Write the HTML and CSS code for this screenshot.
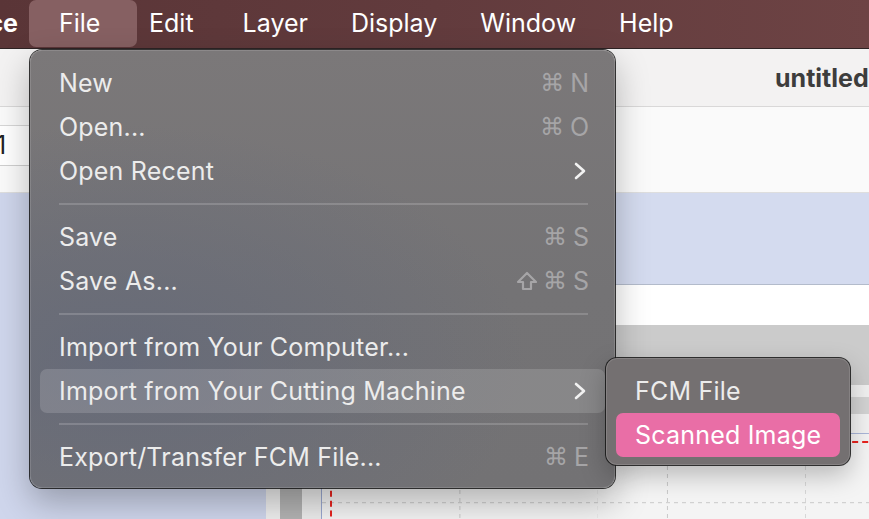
FILE: index.html
```html
<!DOCTYPE html>
<html>
<head>
<meta charset="utf-8">
<link rel="stylesheet" href="styles.css">
</head>
<body>
<div class="screen">
  <header class="menubar">
    <span class="mb-app"><span>Canvas Workspace</span></span>
    <span class="mb-active">File</span>
    <span class="mb-item mb-edit">Edit</span>
    <span class="mb-item mb-layer">Layer</span>
    <span class="mb-item">Display</span>
    <span class="mb-item">Window</span>
    <span class="mb-item">Help</span>
  </header>

  <div class="window">
    <div class="titlebar"><span class="title">untitled</span></div>
    <div class="toolbar"><div class="field"><span class="field-val">1</span></div></div>
    <div class="content">
      <aside class="sidebar"></aside>
      <main class="main">
        <div class="band"></div>
        <div class="strip"></div>
        <div class="workspace">
          <div class="frame">
            <div class="ruler-top"></div>
            <div class="frame-body">
              <div class="ruler-left"></div>
              <div class="canvas">
                <div class="red-rect"></div>
              </div>
            </div>
          </div>
        </div>
      </main>
    </div>
  </div>

  <div class="menu">
    <div class="row"><span class="label">New</span><span class="key"><span class="sym">⌘</span>N</span></div>
    <div class="row"><span class="label">Open...</span><span class="key"><span class="sym">⌘</span>O</span></div>
    <div class="row"><span class="label">Open Recent</span><svg class="chev" width="14" height="18" viewBox="0 0 14 18"><polyline points="3,2 11,9 3,16" fill="none" stroke="#f2f2f2" stroke-width="2.6" stroke-linecap="round" stroke-linejoin="round"/></svg></div>
    <div class="sep"></div>
    <div class="row"><span class="label">Save</span><span class="key"><span class="sym">⌘</span>S</span></div>
    <div class="row"><span class="label">Save As...</span><span class="key"><svg class="shift" width="22" height="20" viewBox="0 0 22 20"><polygon points="11,2 20,11 15,11 15,18 7,18 7,11 2,11" fill="none" stroke="#a6a5a7" stroke-width="2.2" stroke-linejoin="round"/></svg><span class="sym">⌘</span>S</span></div>
    <div class="sep"></div>
    <div class="row"><span class="label">Import from Your Computer...</span></div>
    <div class="row hover"><span class="label">Import from Your Cutting Machine</span><svg class="chev" width="14" height="18" viewBox="0 0 14 18"><polyline points="3,2 11,9 3,16" fill="none" stroke="#f2f2f2" stroke-width="2.6" stroke-linecap="round" stroke-linejoin="round"/></svg></div>
    <div class="sep"></div>
    <div class="row"><span class="label">Export/Transfer FCM File...</span><span class="key"><span class="sym">⌘</span>E</span></div>
  </div>

  <div class="submenu">
    <div class="srow"><span class="label">FCM File</span></div>
    <div class="srow selected"><span class="label">Scanned Image</span></div>
  </div>
</div>
</body>
</html>
```

FILE: styles.css
```css
* { box-sizing: border-box; }
html, body { margin: 0; padding: 0; }
body {
  width: 869px;
  height: 519px;
  overflow: hidden;
  font-family: Inter, "Noto Sans", "DejaVu Sans", sans-serif;
  background: #cccccc;
}
.screen {
  position: relative;
  width: 869px;
  height: 519px;
  overflow: hidden;
  display: flex;
  flex-direction: column;
}

/* ---------- menubar ---------- */
.menubar {
  height: 49px;
  flex: 0 0 49px;
  display: flex;
  align-items: flex-start;
  background: linear-gradient(90deg, #5a3537 0%, #623b3d 50%, #6d4344 100%);
  border-bottom: 1px solid #2e2324;
  color: #ffffff;
  font-size: 25px;
  line-height: 47px;
}
.mb-app {
  width: 18px;
  overflow: hidden;
  display: flex;
  justify-content: flex-end;
  white-space: nowrap;
  font-weight: 700;
}
.mb-app span { flex: 0 0 auto; }
.mb-active {
  margin-left: 11px;
  width: 108px;
  height: 47px;
  padding-left: 30px;
  border-radius: 7px;
  background: #866062;
}
.mb-item { margin-left: 43px; }
.mb-edit { margin-left: 12px; }
.mb-layer { margin-left: 49px; }

/* ---------- background window ---------- */
.window {
  flex: 1 1 auto;
  display: flex;
  flex-direction: column;
  min-height: 0;
}
.titlebar {
  height: 58px;
  flex: 0 0 58px;
  background: #f3f2f2;
  border-bottom: 1px solid #d9d8d8;
  display: flex;
  align-items: center;
  padding-left: 775px;
}
.title {
  font-size: 25px;
  font-weight: 700;
  color: #3d3d3d;
  white-space: nowrap;
}
.toolbar {
  height: 86px;
  flex: 0 0 86px;
  background: #fafafa;
  border-bottom: 1px solid #dedede;
  padding-top: 18px;
}
.field {
  width: 29px;
  height: 41px;
  background: #ffffff;
  border-top: 1px solid #d6d6d6;
  border-bottom: 1px solid #cfcfcf;
  font-size: 25px;
  color: #222;
  display: flex;
  align-items: center;
  overflow: hidden;
  line-height: 1;
}
.field-val { margin-left: -4px; }
.content {
  flex: 1 1 auto;
  display: flex;
  min-height: 0;
}
.sidebar {
  width: 266px;
  flex: 0 0 266px;
  background: #cfd6ec;
}
.main {
  flex: 1 1 auto;
  display: flex;
  flex-direction: column;
  min-width: 0;
}
.band {
  height: 92px;
  flex: 0 0 92px;
  background: #d4dbef;
  border-bottom: 1px solid #b3bbcb;
}
.strip {
  height: 40px;
  flex: 0 0 40px;
  background: #ffffff;
}
.workspace {
  flex: 1 1 auto;
  background: #cbcbcb;
  padding-top: 60px;
}
.frame {
  height: 200px;
  display: flex;
  flex-direction: column;
}
.ruler-top {
  height: 49px;
  flex: 0 0 49px;
  background: linear-gradient(#f0f0f0 0 12px, #d3d3d3 12px 29px, #f2f2f2 29px 49px);
  border-bottom: 1px solid #aab6d8;
  margin-left: 56px;
}
.frame-body {
  flex: 1 1 auto;
  display: flex;
}
.ruler-left {
  width: 56px;
  flex: 0 0 56px;
  background: linear-gradient(90deg, #eeeeee 0 14px, #b3b3b3 14px 36px, #ececec 36px 55px, #9aa8d0 55px 56px);
}
.canvas {
  flex: 1 1 auto;
  position: relative;
  background-color: #f4f4f4;
  background-image:
    repeating-linear-gradient(180deg, transparent 0 4px, #f4f4f4 4px 8px),
    linear-gradient(90deg, transparent 68px, #c9c9c9 68px 69.2px);
  background-size: 100% 100%, 69.2px 100%;
}
.canvas::after {
  content: "";
  position: absolute;
  inset: 0;
  background-image:
    repeating-linear-gradient(90deg, transparent 0 4px, #f4f4f4 4px 8px),
    linear-gradient(180deg, transparent 68px, #c9c9c9 68px 69.2px);
  background-size: 100% 100%, 100% 69.2px;
}
.red-rect {
  position: absolute;
  left: 8px;
  top: 7px;
  right: -200px;
  bottom: -200px;
  border-left: 2px dashed #e8241f;
  border-top: 2px dashed #e8241f;
  z-index: 1;
}

/* ---------- menu ---------- */
.menu {
  position: absolute;
  left: 30px;
  top: 50px;
  width: 585px;
  height: 438px;
  border-radius: 12px;
  padding: 11px 10px 9px 10px;
  background:
    radial-gradient(ellipse 70% 55% at 15% 72%, rgba(98,104,122,0.75), rgba(98,104,122,0) 100%),
    linear-gradient(180deg, #7b7879 0%, #747375 55%, #737274 100%);
  box-shadow:
    0 0 0 1px rgba(20,20,20,0.85),
    inset 0 0 0 1px rgba(255,255,255,0.13),
    0 14px 34px rgba(0,0,0,0.28);
  color: #ececec;
  font-size: 25px;
  z-index: 10;
}
.row {
  height: 44px;
  display: flex;
  align-items: center;
  justify-content: space-between;
  padding: 0 16px 0 19px;
  border-radius: 7px;
  white-space: nowrap;
}
.row.hover { background: rgba(255,255,255,0.15); }
.label { letter-spacing: 0.2px; }
.key {
  color: #a6a5a7;
  font-size: 25px;
  display: flex;
  align-items: center;
}
.sym {
  font-family: "DejaVu Sans", sans-serif;
  font-size: 24px;
  margin-right: 6px;
}
.shift { margin-right: 5px; }
.chev { margin-right: 2px; }
.sep {
  height: 2px;
  margin: 10px 17px 10px 19px;
  background: rgba(255,255,255,0.17);
}

/* ---------- submenu ---------- */
.submenu {
  position: absolute;
  left: 606px;
  top: 358px;
  width: 244px;
  height: 107px;
  border-radius: 11px;
  padding: 11px 10px 8px 10px;
  background: #747071;
  box-shadow:
    0 0 0 1px rgba(20,20,20,0.85),
    inset 0 0 0 1px rgba(255,255,255,0.13),
    0 10px 26px rgba(0,0,0,0.25);
  color: #ececec;
  font-size: 25px;
  z-index: 11;
}
.srow {
  height: 44px;
  display: flex;
  align-items: center;
  padding-left: 19px;
  border-radius: 7px;
  white-space: nowrap;
}
.srow.selected {
  background: #e96ea6;
  color: #ffffff;
}
```
